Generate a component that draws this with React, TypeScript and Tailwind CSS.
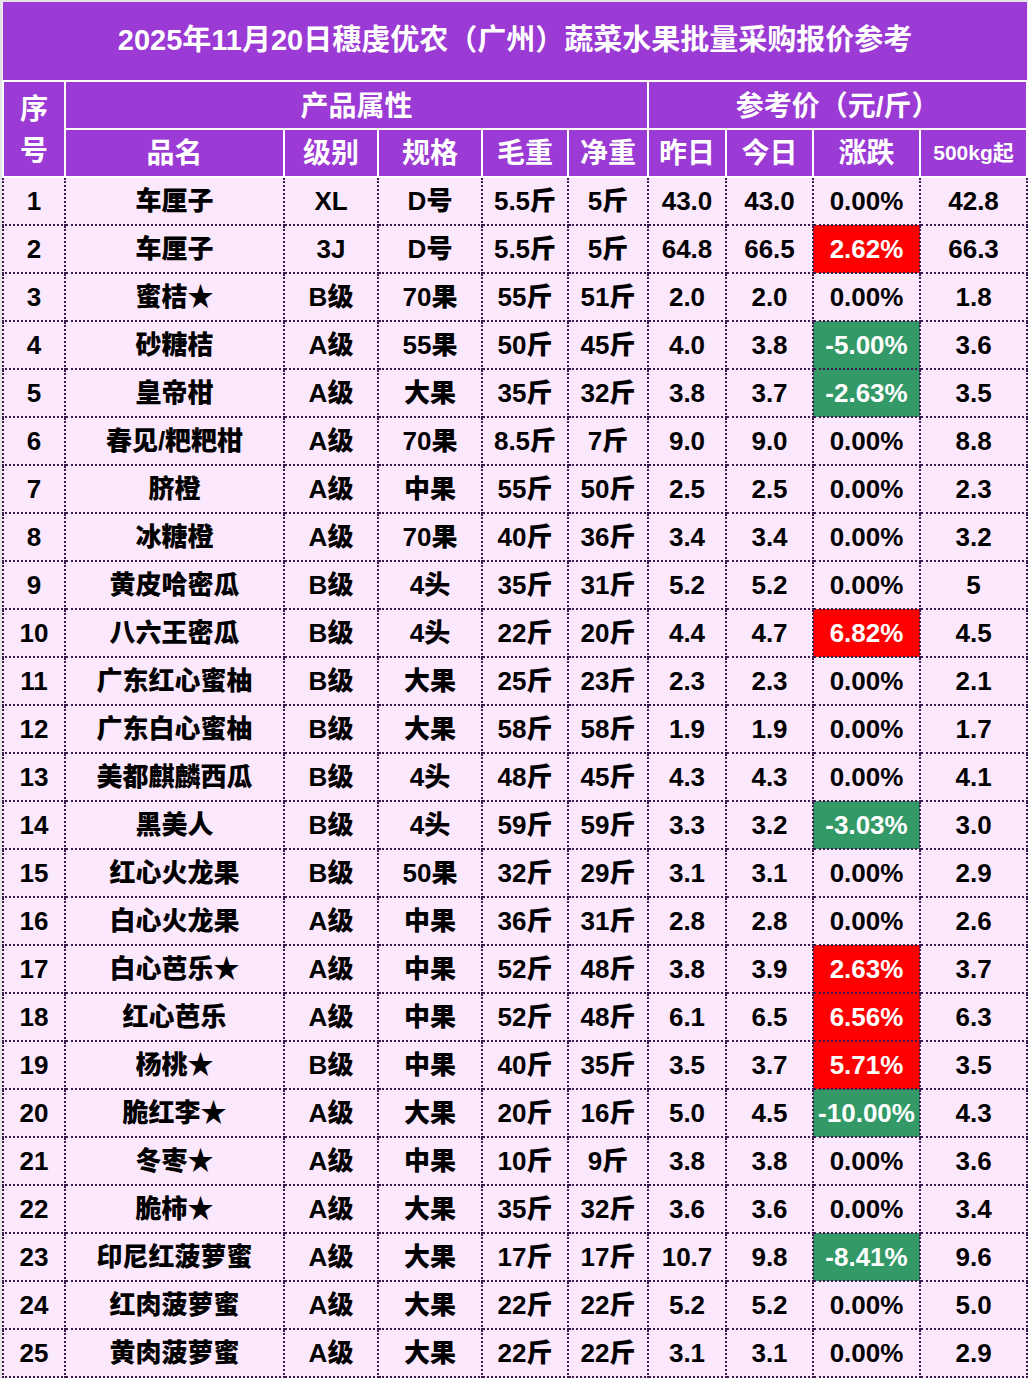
import React from "react";

type Row = [string, string, string, string, string, string, string, string, string, string];

const rows: Row[] = [
  ["1", "车厘子", "XL", "D号", "5.5斤", "5斤", "43.0", "43.0", "0.00%", "42.8"],
  ["2", "车厘子", "3J", "D号", "5.5斤", "5斤", "64.8", "66.5", "2.62%", "66.3"],
  ["3", "蜜桔★", "B级", "70果", "55斤", "51斤", "2.0", "2.0", "0.00%", "1.8"],
  ["4", "砂糖桔", "A级", "55果", "50斤", "45斤", "4.0", "3.8", "-5.00%", "3.6"],
  ["5", "皇帝柑", "A级", "大果", "35斤", "32斤", "3.8", "3.7", "-2.63%", "3.5"],
  ["6", "春见/粑粑柑", "A级", "70果", "8.5斤", "7斤", "9.0", "9.0", "0.00%", "8.8"],
  ["7", "脐橙", "A级", "中果", "55斤", "50斤", "2.5", "2.5", "0.00%", "2.3"],
  ["8", "冰糖橙", "A级", "70果", "40斤", "36斤", "3.4", "3.4", "0.00%", "3.2"],
  ["9", "黄皮哈密瓜", "B级", "4头", "35斤", "31斤", "5.2", "5.2", "0.00%", "5"],
  ["10", "八六王密瓜", "B级", "4头", "22斤", "20斤", "4.4", "4.7", "6.82%", "4.5"],
  ["11", "广东红心蜜柚", "B级", "大果", "25斤", "23斤", "2.3", "2.3", "0.00%", "2.1"],
  ["12", "广东白心蜜柚", "B级", "大果", "58斤", "58斤", "1.9", "1.9", "0.00%", "1.7"],
  ["13", "美都麒麟西瓜", "B级", "4头", "48斤", "45斤", "4.3", "4.3", "0.00%", "4.1"],
  ["14", "黑美人", "B级", "4头", "59斤", "59斤", "3.3", "3.2", "-3.03%", "3.0"],
  ["15", "红心火龙果", "B级", "50果", "32斤", "29斤", "3.1", "3.1", "0.00%", "2.9"],
  ["16", "白心火龙果", "A级", "中果", "36斤", "31斤", "2.8", "2.8", "0.00%", "2.6"],
  ["17", "白心芭乐★", "A级", "中果", "52斤", "48斤", "3.8", "3.9", "2.63%", "3.7"],
  ["18", "红心芭乐", "A级", "中果", "52斤", "48斤", "6.1", "6.5", "6.56%", "6.3"],
  ["19", "杨桃★", "B级", "中果", "40斤", "35斤", "3.5", "3.7", "5.71%", "3.5"],
  ["20", "脆红李★", "A级", "大果", "20斤", "16斤", "5.0", "4.5", "-10.00%", "4.3"],
  ["21", "冬枣★", "A级", "中果", "10斤", "9斤", "3.8", "3.8", "0.00%", "3.6"],
  ["22", "脆柿★", "A级", "大果", "35斤", "32斤", "3.6", "3.6", "0.00%", "3.4"],
  ["23", "印尼红菠萝蜜", "A级", "大果", "17斤", "17斤", "10.7", "9.8", "-8.41%", "9.6"],
  ["24", "红肉菠萝蜜", "A级", "大果", "22斤", "22斤", "5.2", "5.2", "0.00%", "5.0"],
  ["25", "黄肉菠萝蜜", "A级", "大果", "22斤", "22斤", "3.1", "3.1", "0.00%", "2.9"],
];

const widths = [62, 219, 94, 104, 86, 80, 78, 87, 107, 107];

const cell = "border-2 border-dotted border-[#3d1a4d] text-center align-middle p-0 whitespace-nowrap";
const head = "border-2 border-white text-center align-middle p-0 text-white";

function changeClass(v: string) {
  if (v === "0.00%") return "";
  if (v.startsWith("-")) return "bg-[#339966] text-white";
  return "bg-[#ff0000] text-white";
}

export default function App() {
  return (
    <div
      className="w-[1028px] min-h-[1378px] bg-[#e4e4e4] pl-[2px] pt-[2px] font-black text-black"
      style={{ fontFamily: '"Liberation Sans", "Noto Sans CJK SC", sans-serif' }}
    >
      <table className="table-fixed border-collapse w-[1024px] bg-[#fce8fd]">
        <colgroup>
          {widths.map((w, i) => (
            <col key={i} style={{ width: w }} />
          ))}
        </colgroup>
        <thead>
          <tr className="h-[79px]">
            <th colSpan={10} className="bg-[#9b3ad4] text-white text-[29px] border-b-2 border-white p-0 align-middle">
              2025年11月20日穗虔优农（广州）蔬菜水果批量采购报价参考
            </th>
          </tr>
          <tr className="h-[48px] bg-[#9b3ad4]">
            <th rowSpan={2} className={`${head} text-[28px] leading-[42px] pt-[4px]`}>
              序<br />号
            </th>
            <th colSpan={5} className={`${head} text-[28px] pt-[4px]`}>产品属性</th>
            <th colSpan={4} className={`${head} text-[28px] pt-[4px]`}>参考价（元/斤）</th>
          </tr>
          <tr className="h-[48px] bg-[#9b3ad4]">
            <th className={`${head} text-[28px] pt-[2px]`}>品名</th>
            <th className={`${head} text-[28px] pt-[2px]`}>级别</th>
            <th className={`${head} text-[28px] pt-[2px]`}>规格</th>
            <th className={`${head} text-[28px] pt-[2px]`}>毛重</th>
            <th className={`${head} text-[28px] pt-[2px]`}>净重</th>
            <th className={`${head} text-[28px] pt-[2px]`}>昨日</th>
            <th className={`${head} text-[28px] pt-[2px]`}>今日</th>
            <th className={`${head} text-[28px] pt-[2px]`}>涨跌</th>
            <th className={`${head} text-[21px]`}>500kg起</th>
          </tr>
        </thead>
        <tbody>
          {rows.map((r) => (
            <tr key={r[0]} className="h-[48px] text-[26px]">
              {r.map((v, i) => (
                <td key={i} className={`${cell} ${i === 8 ? changeClass(v) : ""}`}>
                  {v}
                </td>
              ))}
            </tr>
          ))}
        </tbody>
      </table>
    </div>
  );
}
